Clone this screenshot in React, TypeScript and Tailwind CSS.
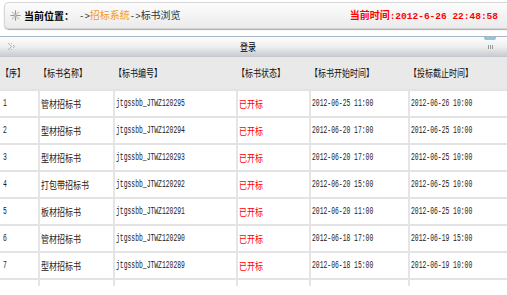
import type { ReactNode } from "react";

type Bid = {
  no: string;
  name: string;
  code: string;
  start: string;
  end: string;
};

const bids: Bid[] = [
  { no: "1", name: "管材招标书", code: "jtgssbb_JTWZ120295", start: "2012-06-25 11:00", end: "2012-06-26 10:00" },
  { no: "2", name: "型材招标书", code: "jtgssbb_JTWZ120294", start: "2012-06-20 17:00", end: "2012-06-25 10:00" },
  { no: "3", name: "型材招标书", code: "jtgssbb_JTWZ120293", start: "2012-06-20 17:00", end: "2012-06-25 10:00" },
  { no: "4", name: "打包带招标书", code: "jtgssbb_JTWZ120292", start: "2012-06-20 15:00", end: "2012-06-25 10:00" },
  { no: "5", name: "板材招标书", code: "jtgssbb_JTWZ120291", start: "2012-06-20 11:00", end: "2012-06-25 10:00" },
  { no: "6", name: "管材招标书", code: "jtgssbb_JTWZ120290", start: "2012-06-18 17:00", end: "2012-06-19 15:00" },
  { no: "7", name: "型材招标书", code: "jtgssbb_JTWZ120289", start: "2012-06-18 15:00", end: "2012-06-19 10:00" },
  { no: "8", name: "管材招标书", code: "jtgssbb_JTWZ120288", start: "2012-06-18 14:00", end: "2012-06-19 10:00" },
];

const cols = "grid grid-cols-[38px_75px_123px_73px_99px_1fr]";

// old page used a squeezed bitmap font, so narrow the glyphs a bit
function Zh({ children, className = "" }: { children: ReactNode; className?: string }) {
  return (
    <span
      className={`inline-block origin-left scale-x-[0.8] whitespace-nowrap font-['Noto_Sans_CJK_SC',sans-serif] text-[10px] leading-none ${className}`}
    >
      {children}
    </span>
  );
}

function Mono({ children }: { children: ReactNode }) {
  return (
    <span className="inline-block origin-left scale-x-[0.58] whitespace-nowrap font-['Liberation_Mono',monospace] text-[11px] leading-none text-[#1a1a1a]">
      {children}
    </span>
  );
}

function Cell({ children, first = false }: { children: ReactNode; first?: boolean }) {
  return (
    <div
      className={`flex items-center overflow-hidden ${first ? "pl-[3px]" : "border-l-2 border-[#e5e5e5] pl-[1px]"}`}
    >
      {children}
    </div>
  );
}

function Star() {
  return (
    <svg width="11" height="11" viewBox="0 0 11 11" className="shrink-0">
      <g stroke="#9a9a9a" strokeWidth="1.2" strokeLinecap="round">
        <line x1="5.5" y1="0.8" x2="5.5" y2="10.2" />
        <line x1="0.8" y1="5.5" x2="10.2" y2="5.5" />
        <line x1="2.2" y1="2.2" x2="8.8" y2="8.8" stroke="#c4c4c4" />
        <line x1="8.8" y1="2.2" x2="2.2" y2="8.8" stroke="#c4c4c4" />
      </g>
    </svg>
  );
}

function Dots() {
  return (
    <svg width="7" height="7" viewBox="0 0 7 7" className="shrink-0">
      <g fill="#b5b5b5">
        <rect x="0" y="0" width="1" height="1" />
        <rect x="1" y="1" width="1" height="1" />
        <rect x="2" y="2" width="1" height="1" />
        <rect x="3" y="3" width="1" height="1" />
        <rect x="2" y="4" width="1" height="1" />
        <rect x="1" y="5" width="1" height="1" />
        <rect x="0" y="6" width="1" height="1" />
        <rect x="3" y="0" width="1" height="1" />
        <rect x="5" y="2" width="1" height="1" />
        <rect x="6" y="3" width="1" height="1" />
        <rect x="5" y="4" width="1" height="1" />
        <rect x="3" y="6" width="1" height="1" />
      </g>
    </svg>
  );
}

export default function App() {
  return (
    <div className="h-[295px] w-[507px] overflow-hidden bg-white">
      {/* location bar */}
      <div className="ml-1 mt-0.5 flex h-[27px] items-center justify-between rounded-l-[5px] border border-r-0 border-[#d6d6d6] bg-linear-to-b from-[#fcfcfc] to-[#ebebeb] pl-[5px] pr-[9px] shadow-[0_1px_1px_#aaaaaa]">
        <div className="flex items-center gap-[3px] font-['Noto_Sans_CJK_SC',sans-serif] text-[10px] leading-none">
          <Star />
          <span className="font-bold text-black">当前位置：</span>
          <span className="ml-0.5 text-[#333]">
            <span className="font-['Liberation_Mono',monospace] text-[9px]">-&gt;</span>
            <span className="text-[#f39a1e]">招标系统</span>
            <span className="font-['Liberation_Mono',monospace] text-[9px]">-&gt;</span>
            标书浏览
          </span>
        </div>
        <div className="font-['Liberation_Mono','Noto_Sans_CJK_SC',monospace] text-[9.5px] font-bold leading-none text-[#ff0000]">
          <span className="font-['Noto_Sans_CJK_SC',sans-serif] text-[10px]">当前时间</span>:2012-6-26 22:48:58
        </div>
      </div>

      {/* panel title */}
      <div className="relative mt-[7px] flex h-[20px] items-center border-t border-[#a7b4c2] bg-linear-to-b from-[#fdfdfd] via-[#eeeff0] to-[#c9cdd1] pl-[8px] pr-[14px]">
        <Dots />
        <div className="flex flex-1 justify-center pr-[4px]">
          <Zh className="text-black">登录</Zh>
        </div>
        <div className="flex gap-[1px]">
          <span className="h-[4px] w-px bg-[#9a9a9a]" />
          <span className="h-[4px] w-px bg-[#9a9a9a]" />
          <span className="h-[4px] w-px bg-[#9a9a9a]" />
        </div>
        <span className="absolute right-[11px] top-0 h-[3px] w-[12px] rounded-b-[2px] bg-[#8dc7de]" />
      </div>

      {/* bid list */}
      <div className="h-[230px] overflow-hidden border-t border-[#c4c8cc]">
        <div className={`${cols} h-[32px] bg-[#e9e9e9] text-black`}>
          {["【序】", "【标书名称】", "【标书编号】", "【标书状态】", "【标书开始时间】", "【投标截止时间】"].map((h) => (
            <div key={h} className="flex items-center pl-[1px]">
              <Zh className="text-[#111]">{h}</Zh>
            </div>
          ))}
        </div>
        {bids.map((b) => (
          <div key={b.code} className={`${cols} h-[27px] border-t-2 border-[#e3e3e3] bg-white`}>
            <Cell first>
              <Mono>{b.no}</Mono>
            </Cell>
            <Cell>
              <Zh className="text-[#222]">{b.name}</Zh>
            </Cell>
            <Cell>
              <Mono>{b.code}</Mono>
            </Cell>
            <Cell>
              <Zh className="text-[#ff0000]">已开标</Zh>
            </Cell>
            <Cell>
              <Mono>{b.start}</Mono>
            </Cell>
            <Cell>
              <Mono>{b.end}</Mono>
            </Cell>
          </div>
        ))}
      </div>
    </div>
  );
}
